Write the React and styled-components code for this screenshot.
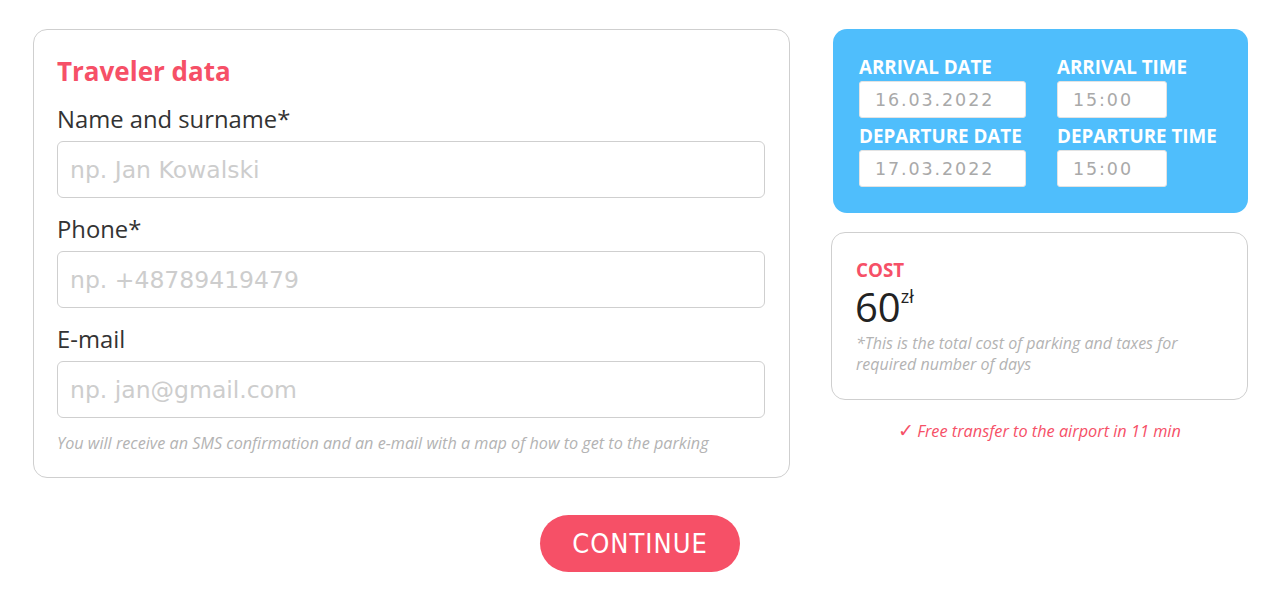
import React from "react";
import styled, { createGlobalStyle } from "styled-components";

const red = "#f65067";
const blue = "#4fbefc";
const line = "#cfcfcf";

const Global = createGlobalStyle`
  body {
    margin: 0;
    background: #fff;
    font-family: "Open Sans", "Liberation Sans", sans-serif;
  }
  * { box-sizing: border-box; }
`;

const Page = styled.div`
  width: 1280px;
  height: 596px;
  padding: 29px 0 0 33px;
`;

const Columns = styled.div`
  display: flex;
  align-items: flex-start;
  gap: 41px;
`;

const Card = styled.div`
  width: 757px;
  border: 1px solid ${line};
  border-radius: 14px;
  padding: 24px 24px 24px 23px;
`;

const Title = styled.h2`
  margin: 0 0 16px;
  color: ${red};
  font-size: 26px;
  font-weight: 700;
  line-height: 34px;
`;

const Label = styled.label`
  display: block;
  color: #333;
  font-size: 23.8px;
  line-height: 30px;
  margin-bottom: 7px;
`;

const Field = styled.input`
  display: block;
  width: 100%;
  height: 57px;
  border: 1px solid ${line};
  border-radius: 6px;
  padding: 0 12px;
  margin-bottom: 16px;
  font-family: "DejaVu Sans", sans-serif;
  font-size: 23.5px;
  outline: none;
  &::placeholder { color: #cdcdcd; }
`;

const Hint = styled.p`
  margin: -1px 0 0;
  color: #b3b3b3;
  font-style: italic;
  font-size: 16.2px;
  line-height: 20px;
`;

const Side = styled.div`
  width: 417px;
  display: flex;
  flex-direction: column;
  gap: 19px;
`;

const BluePanel = styled.div`
  margin-left: 2px;
  background: ${blue};
  border-radius: 14px;
  padding: 27px 0 26px 26px;
  display: grid;
  grid-template-columns: 198px auto;
  row-gap: 7px;
`;

const DateCell = styled.div`
  display: flex;
  flex-direction: column;
`;

const DateLabel = styled.span`
  color: #fff;
  font-weight: 700;
  font-size: 18.8px;
  line-height: 22px;
  text-transform: uppercase;
  margin-bottom: 3px;
`;

const DateBox = styled.div`
  width: ${(p) => p.$w}px;
  height: 37px;
  background: #fff;
  border: 1px solid #e3e3e3;
  border-radius: 3px;
  padding-left: 15px;
  display: flex;
  align-items: center;
  color: #a9a9a9;
  font-family: "DejaVu Sans", sans-serif;
  font-size: 17.5px;
  letter-spacing: 1.9px;
`;

const CostCard = styled.div`
  border: 1px solid ${line};
  border-radius: 14px;
  padding: 26px 24px 24px 24px;
`;

const CostTitle = styled.div`
  color: ${red};
  font-weight: 700;
  font-size: 18.8px;
  line-height: 22px;
`;

const Price = styled.div`
  color: #222;
  font-size: 40px;
  line-height: 46px;
  margin: 3px 0 3px -1px;
`;

const Currency = styled.span`
  display: inline-block;
  font-size: 18px;
  line-height: 1;
  vertical-align: top;
  position: relative;
  top: 3px;
`;

const CostNote = styled.p`
  margin: 0;
  color: #b3b3b3;
  font-style: italic;
  font-size: 16px;
  line-height: 21px;
`;

const Transfer = styled.p`
  margin: 20px 0 0;
  text-align: center;
  color: ${red};
  font-style: italic;
  font-size: 16.3px;
  line-height: 20px;
`;

const Check = styled.span`
  font-style: normal;
  font-size: 19px;
  margin-right: 3px;
`;

const Footer = styled.div`
  display: flex;
  justify-content: center;
  padding: 37px 33px 0 0;
`;

const Button = styled.button`
  width: 200px;
  height: 57px;
  border: none;
  border-radius: 29px;
  background: ${red};
  color: #fff;
  font-family: "DejaVu Sans Condensed", "DejaVu Sans", sans-serif;
  font-size: 27px;
  letter-spacing: 1px;
  cursor: pointer;
`;

const dates = [
  { label: "Arrival date", value: "16.03.2022", w: 167 },
  { label: "Arrival time", value: "15:00", w: 110 },
  { label: "Departure date", value: "17.03.2022", w: 167 },
  { label: "Departure time", value: "15:00", w: 110 },
];

export default function App() {
  return (
    <Page>
      <Global />
      <Columns>
        <Card>
          <Title>Traveler data</Title>
          <Label>Name and surname*</Label>
          <Field placeholder="np. Jan Kowalski" />
          <Label>Phone*</Label>
          <Field placeholder="np. +48789419479" />
          <Label>E-mail</Label>
          <Field placeholder="np. jan@gmail.com" />
          <Hint>
            You will receive an SMS confirmation and an e-mail with a map of how
            to get to the parking
          </Hint>
        </Card>
        <Side>
          <BluePanel>
            {dates.map((d) => (
              <DateCell key={d.label}>
                <DateLabel>{d.label}</DateLabel>
                <DateBox $w={d.w}>{d.value}</DateBox>
              </DateCell>
            ))}
          </BluePanel>
          <div>
            <CostCard>
              <CostTitle>COST</CostTitle>
              <Price>
                60<Currency>zł</Currency>
              </Price>
              <CostNote>
                *This is the total cost of parking and taxes for required
                number of days
              </CostNote>
            </CostCard>
            <Transfer>
              <Check>✓</Check>Free transfer to the airport in 11 min
            </Transfer>
          </div>
        </Side>
      </Columns>
      <Footer>
        <Button>CONTINUE</Button>
      </Footer>
    </Page>
  );
}
